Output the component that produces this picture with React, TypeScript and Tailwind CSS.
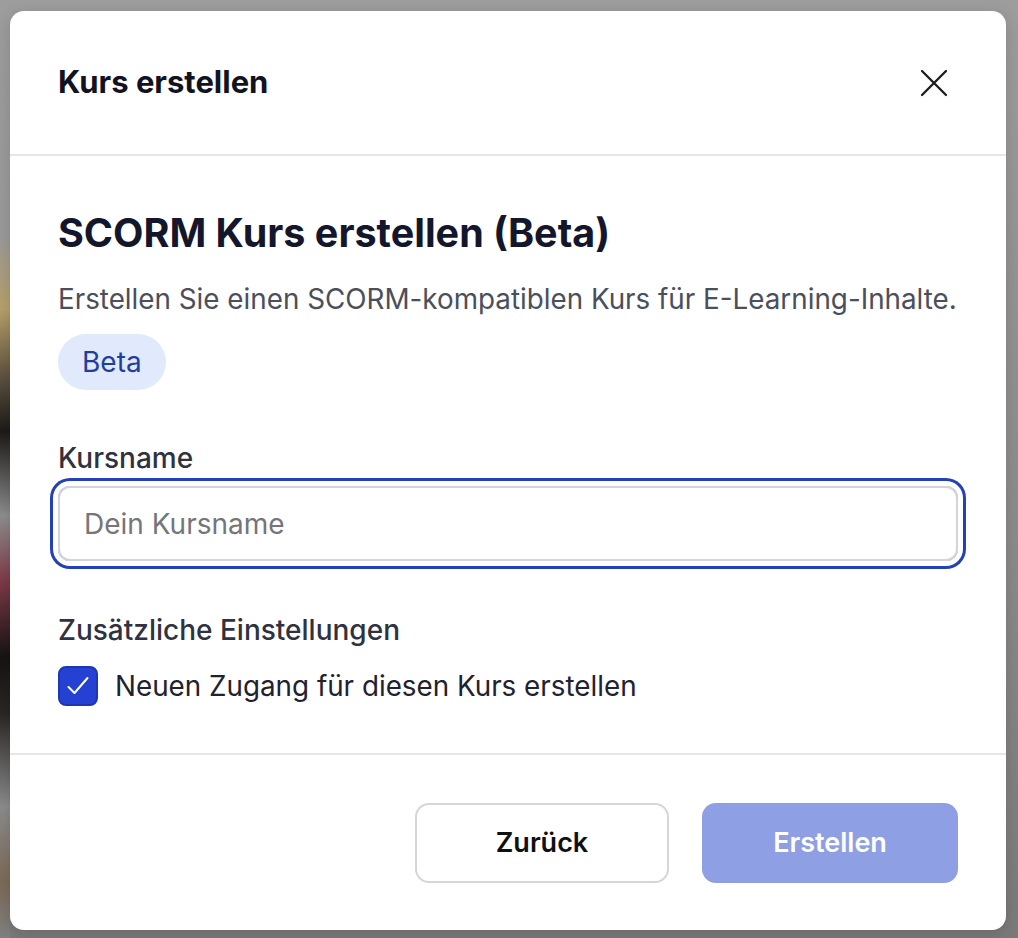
import { useState } from "react";

const CreateCourseDialog = () => {
  const [name, setName] = useState("");
  const [newAccess, setNewAccess] = useState(true);

  return (
    <div className="min-h-[938px] w-full bg-[#8f8f8f] flex font-['Inter',sans-serif]">
      {/* blurred page behind the overlay */}
      <div className="w-[10px] shrink-0 bg-[linear-gradient(to_bottom,#9d9d9d_0%,#9a9a9a_25%,#b7a06a_33%,#5f5440_40%,#1d1a18_46%,#8e8e8e_55%,#7e3a48_62%,#171313_70%,#2a2624_76%,#8c8c8c_86%,#7b6a58_94%,#808080_100%)]" />
      <div className="flex-1 pt-[11px] pb-[8px] pr-[12px] bg-[linear-gradient(to_bottom,#9d9d9d,#8a8a8a_60%,#7a7a7a)]">
        <div className="w-[996px] h-[919px] bg-white rounded-[14px] flex flex-col shadow-[0_4px_16px_rgba(0,0,0,0.15)]">
          <div className="h-[145px] shrink-0 flex items-center justify-between pl-[48px] pr-[58px] border-b-[2px] border-[#e6e6e6]">
            <h1 className="text-[31px] font-bold text-[#111322]">
              Kurs erstellen
            </h1>
            <button className="text-[#1b1b22]">
              <svg
                width="28"
                height="28"
                viewBox="0 0 28 28"
                fill="none"
                stroke="currentColor"
                strokeWidth="2.3"
                strokeLinecap="round"
              >
                <path d="M2 2l24 24M26 2L2 26" />
              </svg>
            </button>
          </div>

          <div className="flex flex-col px-[48px] pt-[54px] pb-[47px] border-b-[2px] border-[#e6e6e6]">
            <h2 className="text-[39.5px] leading-[46px] font-bold text-[#14162b]">
              SCORM Kurs erstellen (Beta)
            </h2>
            <p className="mt-[25px] text-[27.8px] leading-[36px] text-[#4b4f5c]">
              Erstellen Sie einen SCORM-kompatiblen Kurs für E-Learning-Inhalte.
            </p>
            <span className="mt-[17px] self-start h-[56px] px-[24px] flex items-center rounded-full bg-[#e0eafc] text-[28px] text-[#1f3f9e]">
              Beta
            </span>

            <label
              htmlFor="kursname"
              className="mt-[50px] text-[28px] leading-[36px] font-medium text-[#2f3240]"
            >
              Kursname
            </label>
            <div className="mt-[10px] rounded-[12px] ring-[3px] ring-[#2541b8] ring-offset-[5px]">
              <input
                id="kursname"
                value={name}
                onChange={(e) => setName(e.target.value)}
                placeholder="Dein Kursname"
                className="w-full h-[75px] rounded-[12px] border-[2px] border-[#d4d4d6] px-[24px] text-[28px] text-[#1f2937] placeholder:text-[#75757a] outline-none"
              />
            </div>

            <p className="mt-[51px] text-[28px] leading-[36px] font-medium text-[#2f3240]">
              Zusätzliche Einstellungen
            </p>
            <label className="mt-[18px] flex items-center gap-[17px] cursor-pointer">
              <button
                type="button"
                onClick={() => setNewAccess((v) => !v)}
                className={
                  newAccess
                    ? "w-[40px] h-[40px] shrink-0 rounded-[8px] bg-[#2541d3] border-[2px] border-[#1e36b0] flex items-center justify-center"
                    : "w-[40px] h-[40px] shrink-0 rounded-[8px] bg-white border-[2px] border-[#d4d4d6]"
                }
              >
                {newAccess && (
                  <svg
                    width="24"
                    height="24"
                    viewBox="0 0 24 24"
                    fill="none"
                    stroke="white"
                    strokeWidth="2"
                    strokeLinecap="round"
                    strokeLinejoin="round"
                  >
                    <path d="M2.5 13l6 6L21.5 4" />
                  </svg>
                )}
              </button>
              <span className="text-[27.8px] leading-[36px] text-[#1f2230]">
                Neuen Zugang für diesen Kurs erstellen
              </span>
            </label>
          </div>

          <div className="flex justify-end gap-[33px] px-[48px] pt-[48px]">
            <button className="w-[254px] h-[80px] rounded-[14px] border-[2px] border-[#d6d6d6] bg-white text-[27px] font-semibold text-[#0f0f14]">
              Zurück
            </button>
            <button
              disabled
              className="w-[256px] h-[80px] rounded-[14px] bg-[#8f9fe3] text-[27px] font-semibold text-white"
            >
              Erstellen
            </button>
          </div>
        </div>
      </div>
    </div>
  );
};

export default CreateCourseDialog;
